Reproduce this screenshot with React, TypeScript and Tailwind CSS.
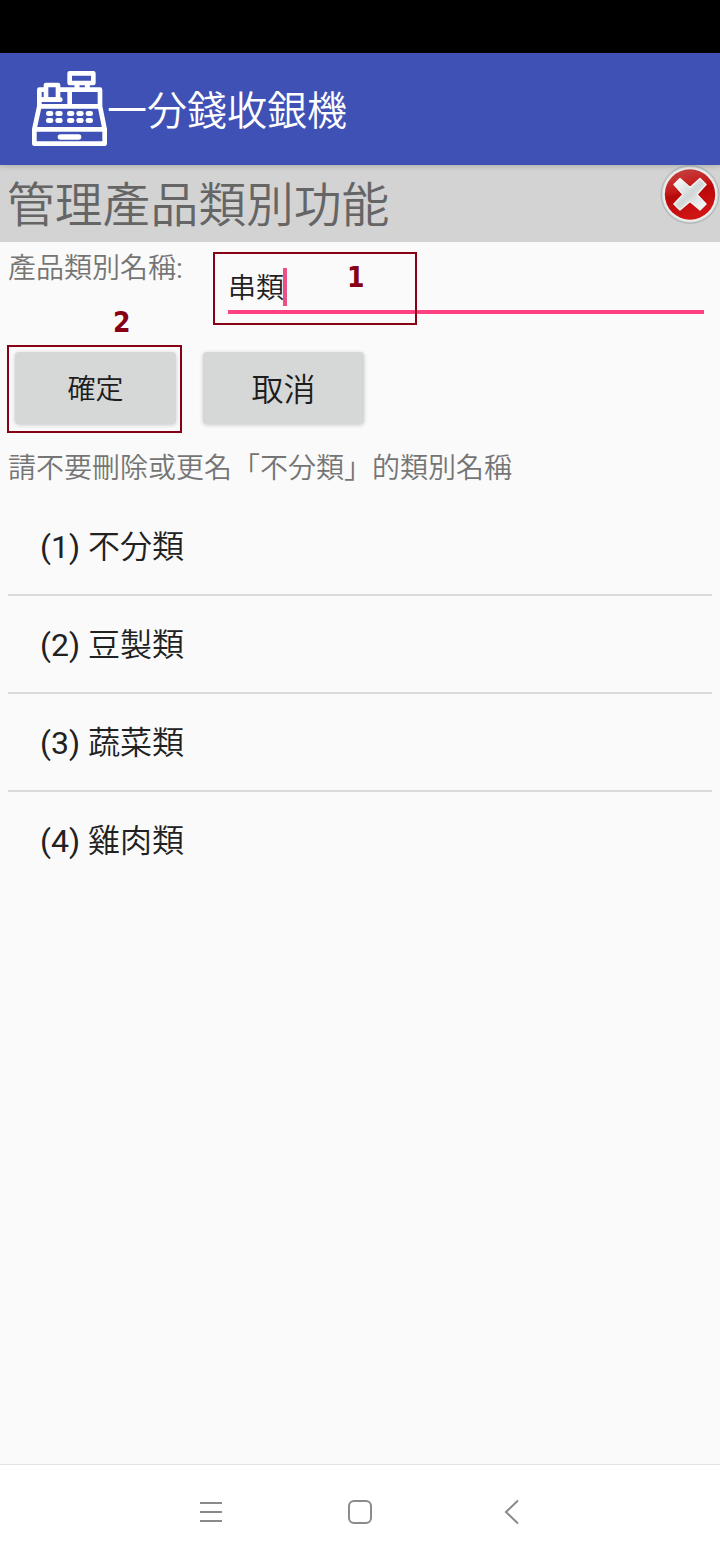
import type { ReactNode } from 'react';

const categories = ['不分類', '豆製類', '蔬菜類', '雞肉類'];

const keyColumns = [66, 94, 129, 157, 185];
const keyRows = [141, 162];

function RegisterIcon() {
  return (
    <svg className="w-[90px] h-[90px] shrink-0" viewBox="0 0 270 270" fill="none" stroke="#fff" strokeWidth={14} strokeLinejoin="round">
      {/* Customer display */}
      <rect x="137" y="28" width="71" height="29" />
      <path d="M159 60v14M190 60v14" strokeWidth={15} />
      {/* Body */}
      <path d="M60 77H46V127L31 196V239H242V196L228 127V77H103M137 77v50M46 127H228M31 196H242" />
      {/* Receipt */}
      <path d="M66 107V63H102V107M53 107H108" />
      <path d="M51 107H109" strokeLinecap="round" />
      {/* Drawer handle */}
      <path d="M109 219H164" strokeWidth={16} strokeLinecap="round" />
      <g fill="#fff" stroke="none">
        {keyRows.map((y) => keyColumns.map((x) => <rect key={`${x}-${y}`} x={x} y={y} width="22" height="15" rx="7" />))}
      </g>
    </svg>
  );
}

function CloseIcon() {
  return (
    <svg className="w-[60px] h-[60px] shrink-0" viewBox="0 0 60 60">
      <defs>
        <linearGradient id="red" x1="0" y1="0" x2="0.3" y2="1">
          <stop offset="0" stopColor="#c84a4a" />
          <stop offset="0.45" stopColor="#c41a1a" />
          <stop offset="0.55" stopColor="#b80808" />
          <stop offset="1" stopColor="#d01414" />
        </linearGradient>
        <linearGradient id="cross" x1="0" y1="0" x2="1" y2="1">
          <stop offset="0" stopColor="#fff" />
          <stop offset="0.5" stopColor="#d0d6d6" />
          <stop offset="1" stopColor="#fff" />
        </linearGradient>
      </defs>
      <circle cx="30" cy="29.5" r="29.5" fill="#b4b9b9" />
      <circle cx="30" cy="29.5" r="28.2" fill="#d3d7d7" />
      <circle cx="30" cy="29.5" r="27.2" fill="#eceeee" />
      <circle cx="30" cy="29.5" r="25.2" fill="url(#red)" />
      <path
        d="M20 13.500L30 22.500L40 13.500L46 19.500L37 29.500L46 39L40 45L30 36.500L20 45L14 39L23 29.500L14 19.500Z"
        fill="url(#cross)"
        stroke="#f0f2f2"
        strokeWidth="1.5"
        strokeLinejoin="round"
      />
    </svg>
  );
}

function Button({ className, children }: { className: string; children: ReactNode }) {
  return (
    <button
      className={`w-[161px] h-[72px] pt-[3px] rounded-[4px] bg-[#d6d7d7] text-[#1d1d1d] shadow-[0_1px_4px_rgba(0,0,0,0.2)] ${className}`}
    >
      {children}
    </button>
  );
}

export default function App() {
  return (
    <div className="w-[720px] h-[1560px] flex flex-col overflow-hidden bg-[#fafafa] text-[#212121] font-[Roboto,'Noto_Sans_CJK_JP_DemiLight','Noto_Sans_CJK_JP',sans-serif]">
      <div className="h-[53px] shrink-0 bg-black" />

      {/* App bar */}
      <header className="relative z-10 h-[112px] shrink-0 flex items-start pl-6 pt-[11px] bg-[#3f51b5] shadow-[0_1px_6px_rgba(0,0,0,0.2)]">
        <RegisterIcon />
        <h1 className="-ml-[7px] mt-[18px] text-[40px] leading-[60px] text-white">一分錢收銀機</h1>
      </header>

      {/* Section title */}
      <div className="h-[77px] shrink-0 flex items-start justify-between pl-[7px] bg-[#d3d3d3]">
        <h2 className="pt-1 text-[47.8px] leading-[74px] text-[#656565]">管理產品類別功能</h2>
        <CloseIcon />
      </div>

      {/* Category name field */}
      <div className="relative h-[102px] shrink-0 flex pl-2 pr-4">
        <label className="w-[220px] pt-[6px] text-[28px] leading-[42px] text-[#757575]">產品類別名稱:</label>
        <div className="flex-1 h-[72px] flex items-start pt-[26px] border-b-4 border-[#ff4081]">
          <span className="text-[28px] leading-[42px]">串類</span>
          <span className="-ml-px w-1 h-[38px] bg-[#ec4f86]" />
        </div>
        <div className="absolute left-[213px] top-[10px] w-[204px] h-[73px] border-2 border-[#880015]" />
        <span className="absolute left-[347px] top-[19px] text-[28px] leading-[33px] font-bold text-[#880015] font-['DejaVu_Sans_Condensed','DejaVu_Sans',sans-serif]">1</span>
        <span className="absolute left-[113px] top-[64px] text-[28px] leading-[33px] font-bold text-[#880015] font-['DejaVu_Sans_Condensed','DejaVu_Sans',sans-serif]">2</span>
      </div>

      <div className="relative h-[96px] shrink-0 flex gap-[27px] pl-[15px] pt-2">
        <Button className="text-[28px]">確定</Button>
        <Button className="text-[32px]">取消</Button>
        <div className="absolute left-[7px] top-[1px] w-[175px] h-[88px] border-2 border-[#880015]" />
      </div>

      <p className="h-[58px] shrink-0 pl-2 pt-2 text-[28px] leading-[42px] text-[#757575]">請不要刪除或更名「不分類」的類別名稱</p>

      <ul className="flex-1 mx-2">
        {categories.map((name, i) => (
          <li key={name} className="h-[98px] pl-8 pt-px flex items-center text-[32px] border-b-2 border-[#dadada] last:border-transparent">
            ({i + 1}) {name}
          </li>
        ))}
      </ul>

      {/* System navigation */}
      <nav className="h-24 shrink-0 border-t border-[#e4e4e4] bg-white">
        <svg className="w-full h-[95px]" viewBox="0 0 720 95" fill="none" stroke="#8a8a8a" strokeWidth="2">
          <path d="M200 38H222M200 47H222M200 56H222" />
          <rect x="349" y="36" width="22" height="22" rx="5" />
          <path d="M518 35.500L506 47L518 58.500" />
        </svg>
      </nav>
    </div>
  );
}
